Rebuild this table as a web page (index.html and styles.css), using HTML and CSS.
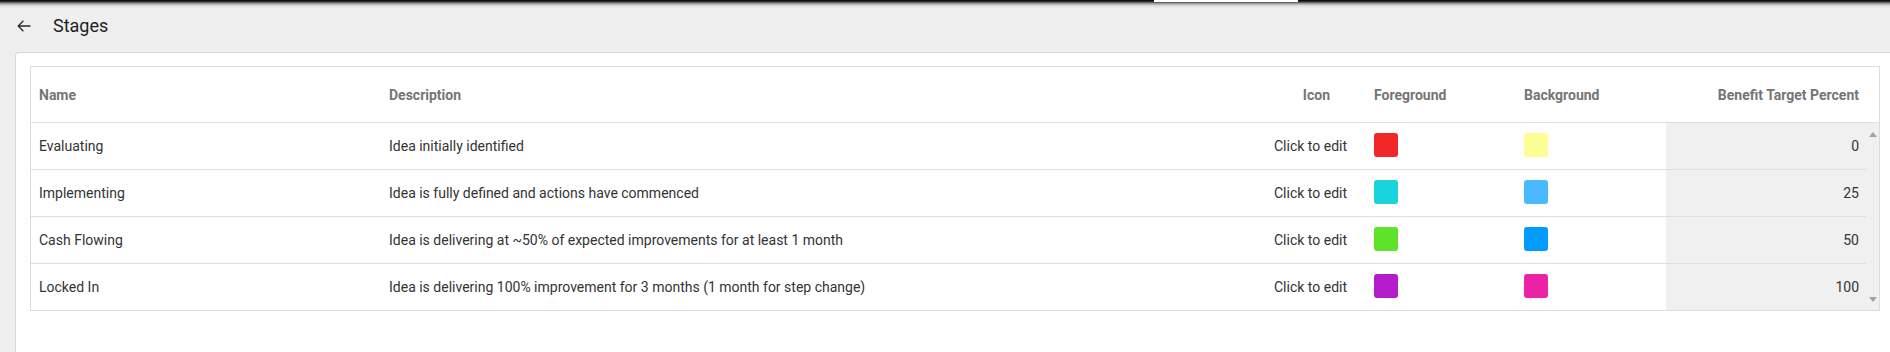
FILE: index.html
```html
<!DOCTYPE html>
<html>
<head>
<meta charset="utf-8">
<title>Stages</title>
<link rel="stylesheet" href="styles.css">
</head>
<body class="page">
<div class="top-shadow"><div class="tab-marker"></div></div>
<header class="page-header">
  <svg class="back-icon" width="14" height="12" viewBox="0 0 14 12">
    <path d="M13.5 6H1.2M6.4 0.8L1.2 6l5.2 5.2" fill="none" stroke="#2b2b2b" stroke-width="1.3"/>
  </svg>
  <h1 class="title">Stages</h1>
</header>
<main class="card">
  <div class="grid-table">
    <div class="head-row cols">
      <div class="th">Name</div>
      <div class="th">Description</div>
      <div class="th th-icon">Icon</div>
      <div class="th">Foreground</div>
      <div class="th">Background</div>
      <div class="th th-right">Benefit Target Percent</div>
    </div>
    <div class="body-area">
      <div class="rows">
        <div class="row cols">
          <div class="td">Evaluating</div>
          <div class="td">Idea initially identified</div>
          <div class="td">Click to edit</div>
          <div class="td"><span class="swatch" style="background:#f12626"></span></div>
          <div class="td"><span class="swatch" style="background:#fdfd96"></span></div>
          <div class="td td-num">0</div>
        </div>
        <div class="row cols">
          <div class="td">Implementing</div>
          <div class="td">Idea is fully defined and actions have commenced</div>
          <div class="td">Click to edit</div>
          <div class="td"><span class="swatch" style="background:#19d3de"></span></div>
          <div class="td"><span class="swatch" style="background:#4ab8ff"></span></div>
          <div class="td td-num">25</div>
        </div>
        <div class="row cols">
          <div class="td">Cash Flowing</div>
          <div class="td">Idea is delivering at ~50% of expected improvements for at least 1 month</div>
          <div class="td">Click to edit</div>
          <div class="td"><span class="swatch" style="background:#5ee22a"></span></div>
          <div class="td"><span class="swatch" style="background:#009bff"></span></div>
          <div class="td td-num">50</div>
        </div>
        <div class="row cols">
          <div class="td">Locked In</div>
          <div class="td">Idea is delivering 100% improvement for 3 months (1 month for step change)</div>
          <div class="td">Click to edit</div>
          <div class="td"><span class="swatch" style="background:#b21cc9"></span></div>
          <div class="td"><span class="swatch" style="background:#ec22a6"></span></div>
          <div class="td td-num">100</div>
        </div>
      </div>
      <div class="scrollbar">
        <span class="arrow-up"></span>
        <span class="arrow-down"></span>
      </div>
    </div>
  </div>
</main>
</body>
</html>
```
FILE: styles.css
```css
* { box-sizing: border-box; }

html, .page {
  margin: 0;
  padding: 0;
}

.page {
  position: relative;
  width: 1890px;
  height: 352px;
  overflow: hidden;
  background: #efefef;
  font-family: Roboto, "Liberation Sans", sans-serif;
  font-size: 14px;
  color: #333;
}

.top-shadow {
  position: absolute;
  top: 0;
  left: 0;
  right: 0;
  height: 8px;
  background: linear-gradient(to bottom, #000 0px, #2a2a2a 1.5px, #9a9a9a 3.5px, #d8d8d8 5.5px, #efefef 8px);
}

.tab-marker {
  position: absolute;
  top: 0;
  left: 1154px;
  width: 144px;
  height: 2px;
  background: #fff;
}

.page-header {
  height: 50px;
  display: flex;
  align-items: center;
  padding-left: 17px;
  padding-top: 1px;
}

.back-icon {
  display: block;
  margin-right: 22px;
}

.title {
  margin: 0;
  font-size: 18px;
  font-weight: 400;
  color: #1f1f1f;
}

.card {
  margin-top: 2px;
  margin-left: 15px;
  margin-right: -10px;
  height: 300px;
  background: #fff;
  border: 1px solid #d7d7d7;
  border-bottom: none;
  border-radius: 4px 0 0 0;
  padding: 13px 0 0 14px;
}

.grid-table {
  width: 1850px;
  border: 1px solid #dcdcdc;
}

.cols {
  display: grid;
  grid-template-columns: 350px 885px 100px 150px 150px 200px;
}

.head-row {
  height: 56px;
  border-bottom: 1px solid #e0e0e0;
  padding-right: 13px;
}

.th {
  display: flex;
  align-items: center;
  padding: 0 8px;
  font-weight: 700;
  color: #757575;
}

.th-icon {
  justify-content: flex-end;
  padding-right: 36px;
}

.th-right {
  justify-content: flex-end;
  padding-right: 7px;
}

.body-area {
  display: flex;
}

.rows {
  flex: 1;
}

.row {
  height: 47px;
  border-bottom: 1px solid #e0e0e0;
}

.row:last-child {
  height: 46px;
  border-bottom: none;
}

.td {
  display: flex;
  align-items: center;
  padding: 0 8px;
  color: #333;
}

.td-num {
  justify-content: flex-end;
  padding-right: 7px;
  background: #f0f0f0;
}

.swatch {
  display: block;
  width: 24px;
  height: 24px;
  border-radius: 3px;
  margin-top: -3px;
}

.scrollbar {
  width: 13px;
  background: #f0f0f0;
  display: flex;
  flex-direction: column;
  justify-content: space-between;
  align-items: center;
  padding: 9px 0 8px;
}

.arrow-up {
  width: 0;
  height: 0;
  border-left: 4px solid transparent;
  border-right: 4px solid transparent;
  border-bottom: 5px solid #a3a3a3;
}

.arrow-down {
  width: 0;
  height: 0;
  border-left: 4px solid transparent;
  border-right: 4px solid transparent;
  border-top: 5px solid #a3a3a3;
}
```
